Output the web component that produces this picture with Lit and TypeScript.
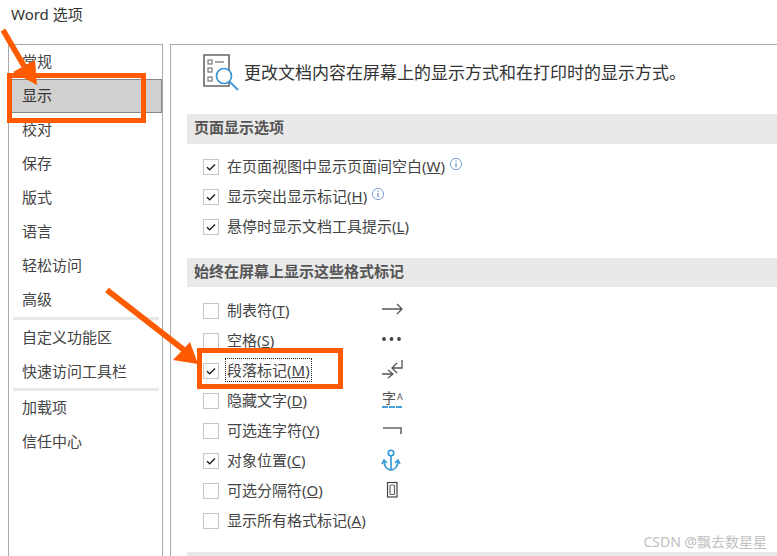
import { LitElement, html, css, svg } from "lit";
import { customElement } from "lit/decorators.js";

const CHECK = svg`<svg class="tick" viewBox="0 0 16 16" width="16" height="16"><path d="M4 8.200l2.700 2.600L12 5.600" fill="none" stroke="#222" stroke-width="1.400"/></svg>`;
const INFO = html`<svg class="info" viewBox="0 0 14 14" width="14" height="14"><circle cx="7" cy="7" r="5.600" fill="#fff" stroke="#7d9fd0" stroke-width="1"/><path d="M7 6v4.200M7 3.600v1.200" stroke="#5a7fb8" stroke-width="1.100"/></svg>`;

const SYMBOLS: Record<string, unknown> = {
  tab: svg`<svg viewBox="0 0 24 24" width="24" height="24"><path d="M2 10h20M17 5l5 5-5 5" fill="none" stroke="#555" stroke-width="1.300"/></svg>`,
  space: svg`<svg viewBox="0 0 24 24" width="24" height="24"><g fill="#444"><circle cx="4" cy="10" r="1.900"/><circle cx="11.500" cy="10" r="1.900"/><circle cx="19" cy="10" r="1.900"/></g></svg>`,
  para: svg`<svg viewBox="0 0 24 24" width="24" height="24"><path d="M2 15h11M8 11l5 4-5 4" fill="none" stroke="#555" stroke-width="1.300"/><path d="M22 1v8H12M17 4l-5 5 5 5" fill="none" stroke="#555" stroke-width="1.300"/></svg>`,
  anchor: svg`<svg viewBox="0 0 24 24" width="24" height="24"><g fill="none" stroke="#2f96d6" stroke-width="1.600"><circle cx="11" cy="4" r="2.800"/><path d="M11 7v14M4 12c0 5 3 9 7 9s7-4 7-9"/><path d="M2 15l2-4 3 3M20 15l-2-4-3 3"/></g></svg>`,
  optional: svg`<svg viewBox="0 0 24 24" width="24" height="24"><path d="M3 9h18v6" fill="none" stroke="#666" stroke-width="1.600"/></svg>`,
  brk: svg`<svg viewBox="0 0 24 24" width="24" height="24"><rect x="7.500" y="3.500" width="9.500" height="14.500" fill="none" stroke="#444" stroke-width="1.200"/><rect x="10" y="6" width="4.500" height="9.500" rx="1" fill="none" stroke="#666" stroke-width="1.200"/></svg>`,
};

type Opt = { label: string; key: string; checked?: boolean; info?: boolean; focus?: boolean; symbol?: string };

const PAGE_OPTS: Opt[] = [
  { label: "在页面视图中显示页面间空白", key: "W", checked: true, info: true },
  { label: "显示突出显示标记", key: "H", checked: true, info: true },
  { label: "悬停时显示文档工具提示", key: "L", checked: true },
];
const MARK_OPTS: Opt[] = [
  { label: "制表符", key: "T", symbol: "tab" },
  { label: "空格", key: "S", symbol: "space" },
  { label: "段落标记", key: "M", checked: true, focus: true, symbol: "para" },
  { label: "隐藏文字", key: "D", symbol: "hidden" },
  { label: "可选连字符", key: "Y", symbol: "optional" },
  { label: "对象位置", key: "C", checked: true, symbol: "anchor" },
  { label: "可选分隔符", key: "O", symbol: "brk" },
  { label: "显示所有格式标记", key: "A" },
];
const NAV_A = ["常规", "显示", "校对", "保存", "版式", "语言", "轻松访问", "高级"];
const NAV_B = ["自定义功能区", "快速访问工具栏"];
const NAV_C = ["加载项", "信任中心"];

@customElement("app-root")
export class AppRoot extends LitElement {
  static styles = css`
    :host {
      display: block;
      position: relative;
      width: 777px;
      height: 556px;
      overflow: hidden;
      background: #fff;
      font-family: "Noto Sans", "Noto Sans CJK SC", sans-serif;
      color: #444;
      font-size: 15px;
    }
    .title {
      height: 44px;
      box-sizing: border-box;
      padding: 4px 0 0 11px;
      line-height: 20px;
      font-size: 15px;
      color: #333;
    }
    .body { display: flex; gap: 7px; padding-left: 8px; height: 512px; }
    .nav {
      width: 155px;
      box-sizing: border-box;
      border: 1px solid #ababab;
      border-bottom: none;
      flex: none;
    }
    .nav-item {
      height: 34px;
      line-height: 32px;
      padding-left: 13px;
      box-sizing: border-box;
    }
    .nav-item.sel {
      background: #d2d0ce;
      border-top: 1px solid #8a8886;
      border-bottom: 1px solid #8a8886;
      border-right: 1px solid #8a8886;
      line-height: 30px;
      color: #333;
    }
    .nav-sep { height: 3px; margin: 0 3px 1px 4px; background: #e8e8e8; }
    .nav-sep.tight { margin: -1px 3px 0 4px; }
    .main {
      flex: 1;
      border: 1px solid #ababab;
      border-right: none;
      border-bottom: none;
      padding: 9px 0 0 16px;
      min-width: 0;
    }
    .lead { display: flex; align-items: center; gap: 5px; height: 38px; padding-left: 16px; margin-bottom: 22px; }
    .lead span { font-size: 17px; color: #333; margin-top: -3px; white-space: nowrap; }
    .lead svg { flex: none; }
    .section {
      height: 30px;
      line-height: 27px;
      background: #e9e9e9;
      padding-left: 7px;
      font-weight: 700;
      color: #555;
      font-size: 15px;
    }
    .section.second { margin-top: 16px; height: 29px; }
    .opts { display: flex; flex-direction: column; padding-left: 16px; }
    .opts.a { padding-top: 8px; }
    .opts.b { padding-top: 9px; position: relative; }
    .opt { display: flex; align-items: center; height: 30px; }
    .box {
      width: 16px;
      height: 16px;
      box-sizing: border-box;
      border: 1px solid #c6c6c6;
      background: #fff;
      flex: none;
      display: flex;
      align-items: center;
      justify-content: center;
      margin-right: 6px;
    }
    .tick { display: block; flex: none; }
    .label { padding: 0 1px; line-height: 22px; border: 1px solid transparent; white-space: nowrap; margin-top: -2px; }
    .label.focus { border: 1px dotted #222; }
    .label u { text-underline-offset: 1px; }
    .info { margin: -6px 0 0 2px; flex: none; }
    .row-sym { position: absolute; left: 193px; width: 24px; height: 24px; }
    .row-sym svg { display: block; }
    .hid {
      width: 20px;
      margin-left: 2px;
      font-size: 14px;
      line-height: 14px;
      padding-top: 2px;
      color: #555;
      border-bottom: 2px dashed #4a9fd8;
      height: 15px;
      white-space: nowrap;
    }
    .hid sup { font-size: 9px; vertical-align: 3px; line-height: 0; margin-left: 1px; }
    .foot { height: 5px; background: #e9e9e9; margin-top: 16px; }
    .watermark {
      position: absolute;
      right: 10px;
      bottom: 4px;
      font-size: 14px;
      color: #c0c0c0;
      line-height: 20px;
    }
    .overlay { position: absolute; inset: 0; width: 777px; height: 556px; pointer-events: none; }
  `;

  private opt(o: Opt, i: number) {
    return html`<div class="opt">
      <span class="box">${o.checked ? CHECK : ""}</span>
      <span class="label ${o.focus ? "focus" : ""}">${o.label}(<u>${o.key}</u>)</span>
      ${o.info ? INFO : ""}
      ${o.symbol
        ? html`<span class="row-sym" style="top:${12 + i * 30}px">
            ${o.symbol === "hidden" ? html`<div class="hid">字<sup>A</sup></div>` : SYMBOLS[o.symbol]}
          </span>`
        : ""}
    </div>`;
  }

  private item(n: string) {
    return html`<div class="nav-item ${n === "显示" ? "sel" : ""}">${n}</div>`;
  }

  render() {
    return html`
      <div class="title">Word 选项</div>
      <div class="body">
        <div class="nav">
          ${NAV_A.map((n) => this.item(n))}
          <div class="nav-sep"></div>
          ${NAV_B.map((n) => this.item(n))}
          <div class="nav-sep tight"></div>
          ${NAV_C.map((n) => this.item(n))}
        </div>
        <div class="main">
          <div class="lead">
            <svg viewBox="0 0 36 38" width="36" height="38">
              <path d="M1 1h25v31H1z" fill="#fff" stroke="#666" stroke-width="1.600"/>
              <g fill="none" stroke="#777" stroke-width="1.200">
                <rect x="5" y="6" width="4" height="4"/><rect x="5" y="14" width="4" height="4"/><rect x="5" y="23" width="4" height="4"/>
              </g>
              <path d="M12 8h9" stroke="#777" stroke-width="1.300"/>
              <circle cx="21" cy="22" r="7.500" fill="#fff" stroke="#3a97d4" stroke-width="1.700"/>
              <path d="M26.500 27.500L35 36" stroke="#3a97d4" stroke-width="1.800"/>
            </svg>
            <span>更改文档内容在屏幕上的显示方式和在打印时的显示方式。</span>
          </div>
          <div class="section">页面显示选项</div>
          <div class="opts a">${PAGE_OPTS.map((o, i) => this.opt(o, i))}</div>
          <div class="section second">始终在屏幕上显示这些格式标记</div>
          <div class="opts b">${MARK_OPTS.map((o, i) => this.opt(o, i))}</div>
          <div class="foot"></div>
        </div>
      </div>
      <div class="watermark">CSDN @飘去数星星</div>
      <svg class="overlay" viewBox="0 0 777 556">
        <path d="M3 30L24 66" stroke="#ff5a00" stroke-width="5.500" fill="none"/>
        <path d="M13 72L35 60L37 85Z" fill="#ff5a00"/>
        <path d="M107 290L184 350" stroke="#ff5a00" stroke-width="6" fill="none"/>
        <path d="M190 342L173 360L198 364Z" fill="#ff5a00"/>
        <rect x="9.500" y="75.500" width="134" height="45" fill="none" stroke="#ff5a00" stroke-width="5"/>
        <rect x="199.500" y="350.500" width="141" height="36" fill="none" stroke="#ff5a00" stroke-width="5"/>
      </svg>
    `;
  }
}
